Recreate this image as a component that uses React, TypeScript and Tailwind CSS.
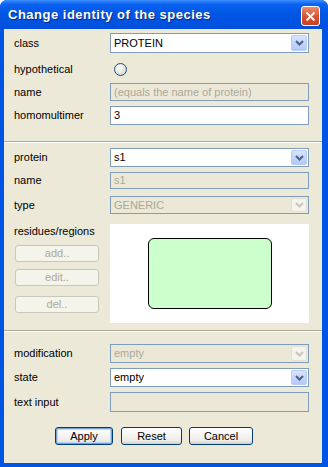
import React from 'react';

const Chevron = ({ disabled }: { disabled?: boolean }) => (
  <svg width="9" height="6" viewBox="0 0 9 6">
    <path d="M1 1 L4.5 4.5 L8 1" fill="none" stroke={disabled ? '#C9C7BA' : '#4D6185'} strokeWidth="2" />
  </svg>
);

const Combo = ({ value, disabled, h }: { value: string; disabled?: boolean; h: string }) => (
  <div
    className={`w-[199px] ${h} border border-[#7F9DB9] flex items-stretch ${
      disabled ? 'bg-[#EBE8D7] text-[#ACA899]' : 'bg-white text-black'
    }`}
  >
    <div className="flex-1 flex items-center pl-[3px]">{value}</div>
    <div
      className={`w-[16px] m-[1px] rounded-[2px] flex items-center justify-center ${
        disabled
          ? 'bg-[#F4F3EE] border border-[#E2E0D6]'
          : 'bg-[linear-gradient(to_bottom,#D7E4FE,#B4C8F8)] border border-[#B8CCF6]'
      }`}
    >
      <Chevron disabled={disabled} />
    </div>
  </div>
);

const Field = ({ value, disabled, h }: { value?: string; disabled?: boolean; h: string }) => (
  <div
    className={`w-[199px] ${h} border border-[#7F9DB9] flex items-center pl-[3px] ${
      disabled ? 'bg-[#EBE8D7] text-[#ACA899]' : 'bg-white text-black'
    }`}
  >
    {value}
  </div>
);

const Row = ({ label, className, children }: { label: string; className: string; children: React.ReactNode }) => (
  <div className={`flex items-center ${className}`}>
    <div className="w-[96px]">{label}</div>
    {children}
  </div>
);

const Separator = ({ className }: { className: string }) => (
  <div className={`${className} border-t border-[#ACA899] border-b-white border-b h-[2px]`} />
);

const SideButton = ({ label, className }: { label: string; className: string }) => (
  <div
    className={`${className} ml-[1px] w-[84px] h-[17px] rounded-[3px] border border-[#C9C7BA] bg-[#F5F4EA] text-[#ACA899] flex items-center justify-center`}
  >
    {label}
  </div>
);

const DialogButton = ({ label, w, focused }: { label: string; w: string; focused?: boolean }) => (
  <div
    className={`${w} h-[18px] rounded-[3px] border border-[#003C74] bg-[linear-gradient(to_bottom,#FFFFFF,#ECEBE6_80%,#D6D0C5)] flex items-center justify-center text-black ${
      focused ? 'shadow-[inset_0_0_0_1px_#7DA2CE,inset_0_0_0_2px_#BCD4F6]' : ''
    }`}
  >
    {label}
  </div>
);

export default function App() {
  return (
    <div className="w-[328px] h-[467px] rounded-t-[7px] bg-[#0054E3] flex flex-col overflow-hidden font-['Liberation_Sans',Arial,sans-serif] text-[11px] text-black">
      <div className="h-[29px] shrink-0 flex items-center justify-between pl-[8px] pr-[8px] bg-[linear-gradient(to_bottom,#3D8FFF_0%,#0A62F0_15%,#0055E3_50%,#0050DC_100%)]">
        <span className="text-white font-bold text-[13px] tracking-[0.5px] [text-shadow:1px_1px_0_#0A2A7A]">
          Change identity of the species
        </span>
        <div className="w-[19px] h-[20px] mt-[3px] rounded-[3px] border border-white bg-[linear-gradient(to_bottom,#EE8A6E,#D9502F_55%,#C6401F)] flex items-center justify-center">
          <svg width="11" height="11" viewBox="0 0 11 11">
            <path d="M1.5 1.5 L9.5 9.5 M9.5 1.5 L1.5 9.5" stroke="white" strokeWidth="2" />
          </svg>
        </div>
      </div>

      <div className="flex-1 ml-[4px] mr-[6px] mb-[4px] bg-[#ECE9D8] flex flex-col">
        <div className="pl-[10px] pt-[4px] flex flex-col">
          <Row label="class" className="h-[20px]">
            <Combo value="PROTEIN" h="h-[20px]" />
          </Row>
          <Row label="hypothetical" className="h-[20px] mt-[6px]">
            <div className="ml-[4px] w-[13px] h-[13px] rounded-full border border-[#1C5180] bg-[radial-gradient(circle_at_40%_35%,#FFFFFF,#DCDCD6_70%,#C8C8C0)]" />
          </Row>
          <Row label="name" className="h-[18px] mt-[4px]">
            <Field value="(equals the name of protein)" disabled h="h-[18px]" />
          </Row>
          <Row label="homomultimer" className="h-[19px] mt-[5px]">
            <Field value="3" h="h-[19px]" />
          </Row>
        </div>

        <Separator className="mt-[16px]" />

        <div className="pl-[10px] flex flex-col">
          <Row label="protein" className="h-[19px] mt-[5px]">
            <Combo value="s1" h="h-[19px]" />
          </Row>
          <Row label="name" className="h-[17px] mt-[5px]">
            <Field value="s1" disabled h="h-[17px]" />
          </Row>
          <Row label="type" className="h-[18px] mt-[7px]">
            <Combo value="GENERIC" disabled h="h-[18px]" />
          </Row>
          <div className="flex mt-[10px] h-[99px]">
            <div className="w-[96px] flex flex-col">
              <div className="leading-[12px] mt-[1px]">residues/regions</div>
              <SideButton label="add.." className="mt-[8px]" />
              <SideButton label="edit.." className="mt-[7px]" />
              <SideButton label="del.." className="mt-[10px]" />
            </div>
            <div className="w-[199px] bg-white flex items-center justify-center">
              <div className="w-[124px] h-[71px] rounded-[6px] border border-black bg-[#CCFFCC]" />
            </div>
          </div>
        </div>

        <Separator className="mt-[7px]" />

        <div className="pl-[10px] flex flex-col">
          <Row label="modification" className="h-[19px] mt-[12px]">
            <Combo value="empty" disabled h="h-[19px]" />
          </Row>
          <Row label="state" className="h-[19px] mt-[5px]">
            <Combo value="empty" h="h-[19px]" />
          </Row>
          <Row label="text input" className="h-[20px] mt-[5px]">
            <Field disabled h="h-[20px]" />
          </Row>
          <div className="flex mt-[15px] pl-[41px]">
            <DialogButton label="Apply" w="w-[58px]" focused />
            <div className="ml-[8px]">
              <DialogButton label="Reset" w="w-[61px]" />
            </div>
            <div className="ml-[7px]">
              <DialogButton label="Cancel" w="w-[64px]" />
            </div>
          </div>
        </div>
      </div>
    </div>
  );
}
